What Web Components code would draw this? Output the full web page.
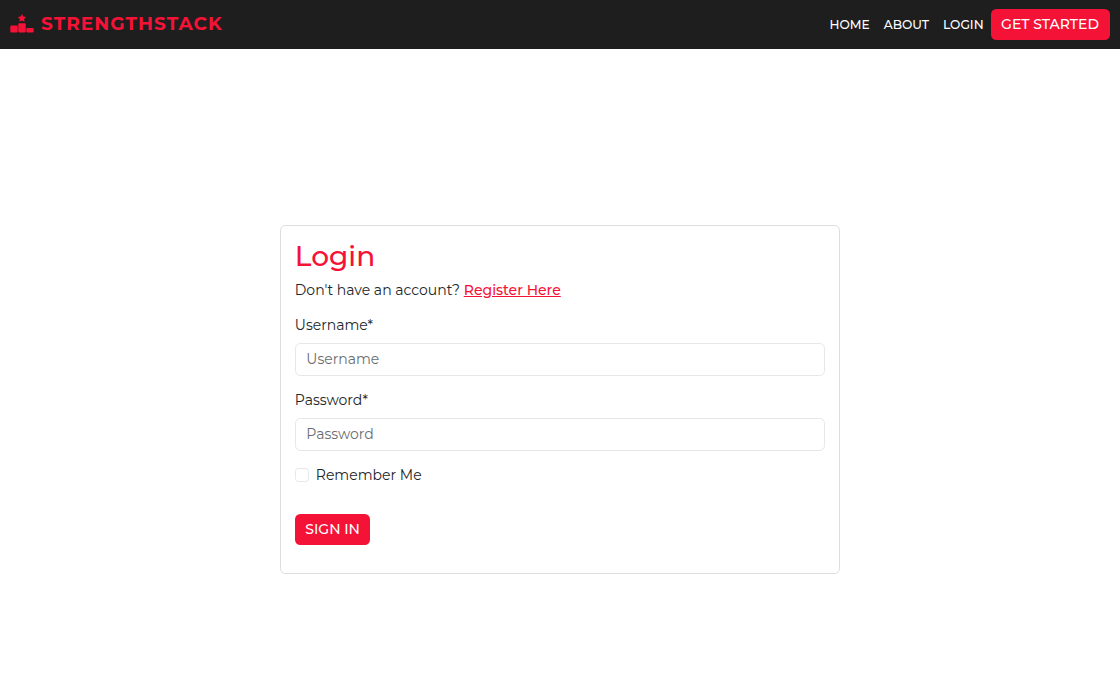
<!DOCTYPE html>
<html lang="en">
<head>
<meta charset="utf-8">
<title>StrengthStack - Login</title>
<style>
html,body{margin:0;height:100%;background:#fff}
body{font-family:Montserrat,Inter,"Open Sans",sans-serif;font-size:14px;line-height:21px;color:#212529;display:flex;flex-direction:column}
</style>
</head>
<body>
<site-header></site-header>
<login-card></login-card>
<script>
const define=(name,html)=>customElements.define(name,class extends HTMLElement{
  connectedCallback(){
    if(this.shadowRoot)return;
    const t=document.createElement('template');
    t.innerHTML=html;
    this.attachShadow({mode:'open'}).append(t.content.cloneNode(true));
  }
});

define('brand-logo',`<style>
:host{display:flex;align-items:center;color:#f51237;font-weight:700;font-size:18.5px;line-height:24px;letter-spacing:1.05px}
svg{width:24px;height:22px;margin-right:7px}
</style>
<svg viewBox="0 0 24 22" fill="currentColor" aria-hidden="true">
<path d="M12 .9 13.3 3.5 16.2 3.9 14.1 5.9 14.6 8.8 12 7.4 9.4 8.8 9.9 5.9 7.8 3.9 10.7 3.5Z"/>
<rect x=".3" y="12.6" width="7.4" height="7" rx="1.1"/><rect x="8.3" y="10.2" width="7.4" height="9.4" rx="1.1"/><rect x="16.3" y="15" width="7.4" height="4.6" rx="1.1"/>
</svg><slot></slot>`);

define('action-button',`<style>
:host{display:block;width:max-content}
button{display:block;box-sizing:border-box;margin:0;padding:5.25px 10.5px;border:0;border-radius:5.25px;background:#f51237;color:#fff;font:inherit;font-weight:500;line-height:21px}
</style><button type="button"><slot></slot></button>`);

define('nav-link',`<style>
:host{display:block;font-weight:500;font-size:12.25px;line-height:19px;color:#fff;padding:0 7px}
a{color:inherit;text-decoration:none}
</style><a><slot></slot></a>`);

define('site-header',`<style>
:host{display:flex;align-items:center;justify-content:space-between;box-sizing:border-box;height:49px;flex:none;padding:0 10.5px 0 10px;background:#1e1e1e}
brand-logo{margin-top:-1px}
nav{display:flex;align-items:center}
</style>
<brand-logo>STRENGTHSTACK</brand-logo>
<nav>
<nav-link>HOME</nav-link>
<nav-link>ABOUT</nav-link>
<nav-link>LOGIN</nav-link>
<action-button>GET STARTED</action-button>
</nav>`);

define('text-field',`<style>
:host{display:block}
.label{height:21px;margin-bottom:7px}
.box{box-sizing:border-box;height:33px;border:1px solid #e6e7e9;border-radius:5.25px;padding:5px 10.5px;color:#6a6d70}
</style>
<div class="label"><slot name="label"></slot></div>
<div class="box"><slot></slot></div>`);

define('check-field',`<style>
:host{display:flex;align-items:center;height:21px}
i{box-sizing:border-box;width:14px;height:14px;border:1px solid #e6e7e9;border-radius:3.5px;margin-right:7px}
</style><i></i><slot></slot>`);

define('login-card',`<style>
:host{display:block;box-sizing:border-box;width:560px;height:349.5px;margin:175.5px auto 0;border:1px solid #dcdddf;border-radius:5.25px;padding:13px 13.8px}
h1{margin:0 0 7px;font-weight:500;font-size:28px;line-height:34px;color:#f51237}
.intro{margin-bottom:14px}
a{color:#f51237;font-weight:500;text-decoration:underline}
text-field{margin-bottom:14px}
check-field{margin-bottom:28px}
</style>
<h1>Login</h1>
<div class="intro">Don't have an account? <a>Register Here</a></div>
<text-field><span slot="label">Username*</span>Username</text-field>
<text-field><span slot="label">Password*</span>Password</text-field>
<check-field>Remember Me</check-field>
<action-button>SIGN IN</action-button>`);
</script>
</body>
</html>
